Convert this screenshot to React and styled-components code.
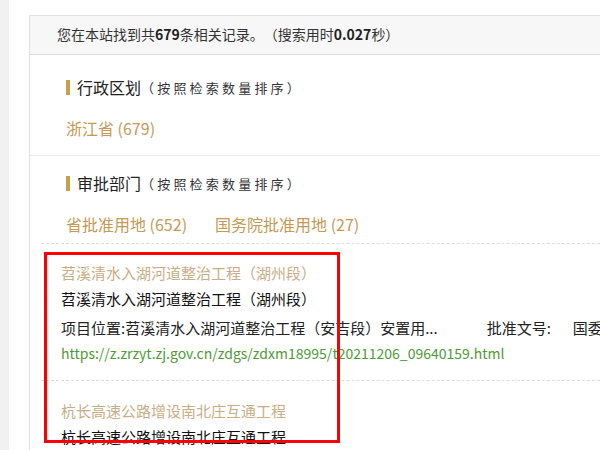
import React from 'react';
import styled, { createGlobalStyle } from 'styled-components';

const Global = createGlobalStyle`
  html, body {
    margin: 0;
    padding: 0;
    background: #fff;
    overflow: hidden;
  }
  body {
    font-family: "Noto Sans CJK SC", "Noto Sans", "Liberation Sans", sans-serif;
    color: #333;
  }
`;

const Page = styled.div`
  display: flex;
  width: 600px;
  height: 450px;
  overflow: hidden;
`;

const Gutter = styled.div`
  width: 9px;
  flex: none;
  background: #f1f1f1;
`;

const Main = styled.div`
  flex: none;
  padding: 15px 0 0 20px;
`;

const Panel = styled.div`
  width: 640px;
  border: 1px solid #e2e2e2;
  background: #fff;
`;

const Summary = styled.div`
  height: 38px;
  line-height: 36px;
  background: #f7f7f7;
  border-bottom: 1px solid #dcdcdc;
  padding-left: 27px;
  font-size: 14px;
  color: #333;
  text-spacing-trim: space-all;
  b {
    color: #222;
    font-weight: 700;
  }
`;

const Section = styled.div`
  padding: ${(p) => p.$pad};
  border-bottom: ${(p) => (p.$line ? '1px solid #ececec' : 'none')};
`;

const Heading = styled.div`
  display: flex;
  align-items: center;
  height: 24px;
  font-size: 16px;
  color: #222;
  &::before {
    content: '';
    width: 4px;
    height: 15px;
    background: #c9a04a;
    margin-right: 7px;
  }
  span {
    font-size: 13px;
    letter-spacing: 3.2px;
    color: #333;
  }
`;

const Links = styled.div`
  display: flex;
  gap: 28px;
  margin-top: 17px;
  line-height: 24px;
  font-size: 16px;
  color: #c49a55;
`;

const Results = styled.div`
  position: relative;
  margin-left: 11px;
`;

const Result = styled.div`
  border-top: 1px dashed #dedede;
  padding: ${(p) => p.$pad};
  padding-left: 20px;
`;

const GoldTitle = styled.div`
  font-size: 15px;
  line-height: 24px;
  color: #c8ae86;
`;

const Title = styled.div`
  font-size: 15px;
  line-height: 24px;
  color: #111;
  margin-top: 2px;
`;

const Meta = styled.div`
  display: flex;
  font-size: 15px;
  line-height: 24px;
  color: #222;
  margin-top: 5px;
  white-space: nowrap;
`;

const MetaLabel = styled.span`
  margin-left: ${(p) => p.$gap || 0}px;
`;

const Url = styled.div`
  font-size: 14px;
  line-height: 24px;
  color: #4f9a37;
  margin-top: 1px;
`;

const Marker = styled.div`
  position: absolute;
  left: 3px;
  top: 9px;
  width: 296px;
  height: 191px;
  box-sizing: border-box;
  border: 3px solid #f00;
  pointer-events: none;
`;

export default function App() {
  return (
    <>
      <Global />
      <Page>
        <Gutter />
        <Main>
          <Panel>
            <Summary>
              您在本站找到共<b>679</b>条相关记录。（搜索用时<b>0.027</b>秒）
            </Summary>
            <Section $pad="20px 0 15px 36px" $line>
              <Heading>
                行政区划<span>（按照检索数量排序）</span>
              </Heading>
              <Links>
                <span>浙江省 (679)</span>
              </Links>
            </Section>
            <Section $pad="15px 0 7px 36px">
              <Heading>
                审批部门<span>（按照检索数量排序）</span>
              </Heading>
              <Links>
                <span>省批准用地 (652)</span>
                <span>国务院批准用地 (27)</span>
              </Links>
            </Section>
            <Results>
              <Result $pad="17px 0 15px">
                <GoldTitle>苕溪清水入湖河道整治工程（湖州段）</GoldTitle>
                <Title>苕溪清水入湖河道整治工程（湖州段）</Title>
                <Meta>
                  <span>项目位置:苕溪清水入湖河道整治工程（安吉段）安置用...</span>
                  <MetaLabel $gap={49}>批准文号:</MetaLabel>
                  <MetaLabel $gap={22}>国委函〔2021〕</MetaLabel>
                </Meta>
                <Url>https://z.zrzyt.zj.gov.cn/zdgs/zdxm18995/t20211206_09640159.html</Url>
              </Result>
              <Result $pad="18px 0 15px">
                <GoldTitle>杭长高速公路增设南北庄互通工程</GoldTitle>
                <Title>杭长高速公路增设南北庄互通工程</Title>
              </Result>
              <Marker />
            </Results>
          </Panel>
        </Main>
      </Page>
    </>
  );
}
